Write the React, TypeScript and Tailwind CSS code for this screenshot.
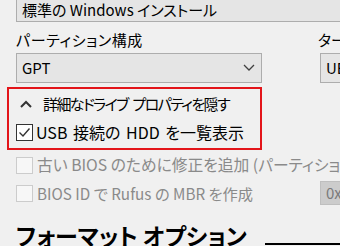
import React from "react";

function Chevron({ up = false, color = "#404040" }: { up?: boolean; color?: string }) {
  return (
    <svg width="12" height="8" viewBox="0 0 12 8" className="shrink-0">
      <path
        d={up ? "M1 7 L6 2 L11 7" : "M1 1 L6 6 L11 1"}
        fill="none"
        stroke={color}
        strokeWidth={up ? 2 : 1.3}
      />
    </svg>
  );
}

function Check() {
  return (
    <div className="w-[17px] h-[17px] border border-[#333333] bg-white flex items-center justify-center shrink-0">
      <svg width="13" height="11" viewBox="0 0 13 11">
        <path d="M1.5 5.5 L5 9 L11.5 1.5" fill="none" stroke="#333333" strokeWidth="1.4" />
      </svg>
    </div>
  );
}

function DisabledBox() {
  return <div className="w-[17px] h-[17px] border border-[#cccccc] bg-[#f7f7f7] shrink-0" />;
}

export default function App() {
  return (
    <div className="w-[340px] h-[246px] overflow-hidden bg-[#f0f0f0] text-black text-[15px] whitespace-nowrap font-['Noto_Sans_CJK_JP','Noto_Sans',sans-serif] [font-feature-settings:'palt']">
      {/* top combo */}
      <div className="ml-[16px] -mt-[10px] h-[32px] w-[340px] border border-[#adadad] bg-[#e5e5e5] flex items-center pl-[5px] pt-[8px]">
        標準の Windows インストール
      </div>

      {/* partition / target row */}
      <div className="flex mt-[8px]">
        <div className="ml-[16px] w-[246px] shrink-0">
          <div className="h-[20px] leading-[20px] tracking-[0.6px]">パーティション構成</div>
          <div className="mt-[3px] h-[30px] border border-[#adadad] bg-[#e5e5e5] flex items-center justify-between pl-[5px] pr-[6px]">
            <span>GPT</span>
            <Chevron />
          </div>
        </div>
        <div className="ml-[56px] w-[60px] shrink-0">
          <div className="h-[20px] leading-[20px]">ターゲット</div>
          <div className="mt-[3px] ml-[2px] h-[30px] border border-[#adadad] bg-[#e5e5e5] flex items-center pl-[5px]">
            UEFI
          </div>
        </div>
      </div>

      {/* red highlighted box */}
      <div className="ml-[7px] mt-[4px] w-[255px] h-[63px] border-2 border-[#e3151a] flex flex-col">
        <div className="h-[29px] flex items-center pl-[11px] pt-[1px]">
          <Chevron up color="#333333" />
          <span className="ml-[11px] text-[15px] tracking-[-1.6px] [word-spacing:3px]">詳細なドライブ プロパティを隠す</span>
        </div>
        <div className="h-[28px] flex items-center pl-[7px]">
          <Check />
          <span className="ml-[3px] text-[16px] [word-spacing:2px]">USB 接続の HDD を一覧表示</span>
        </div>
      </div>

      {/* disabled rows */}
      <div className="ml-[16px] mt-[4px] h-[22px] flex items-center text-[#8a8a8a] text-[15.75px]">
        <DisabledBox />
        <span className="ml-[4px]">古い BIOS のために修正を追加 (パーティション</span>
      </div>
      <div className="mt-[5px] h-[24px] flex items-center text-[#8a8a8a] text-[15.25px]">
        <div className="ml-[16px] flex items-center w-[304px] shrink-0">
          <DisabledBox />
          <span className="ml-[4px]">BIOS ID で Rufus の MBR を作成</span>
        </div>
        <div className="h-[24px] w-[40px] shrink-0 border border-[#bfbfbf] bg-[#cccccc] flex items-center pl-[5px] text-[#7a7a7a] text-[15px]">
          0x80
        </div>
      </div>

      {/* heading */}
      <div className="mt-[16px] flex items-end">
        <div className="ml-[16px] text-[23px] font-bold leading-[28px] shrink-0">フォーマット オプション</div>
        <div className="ml-[18px] flex-1 h-[2px] bg-black mb-[4px]" />
      </div>
    </div>
  );
}
